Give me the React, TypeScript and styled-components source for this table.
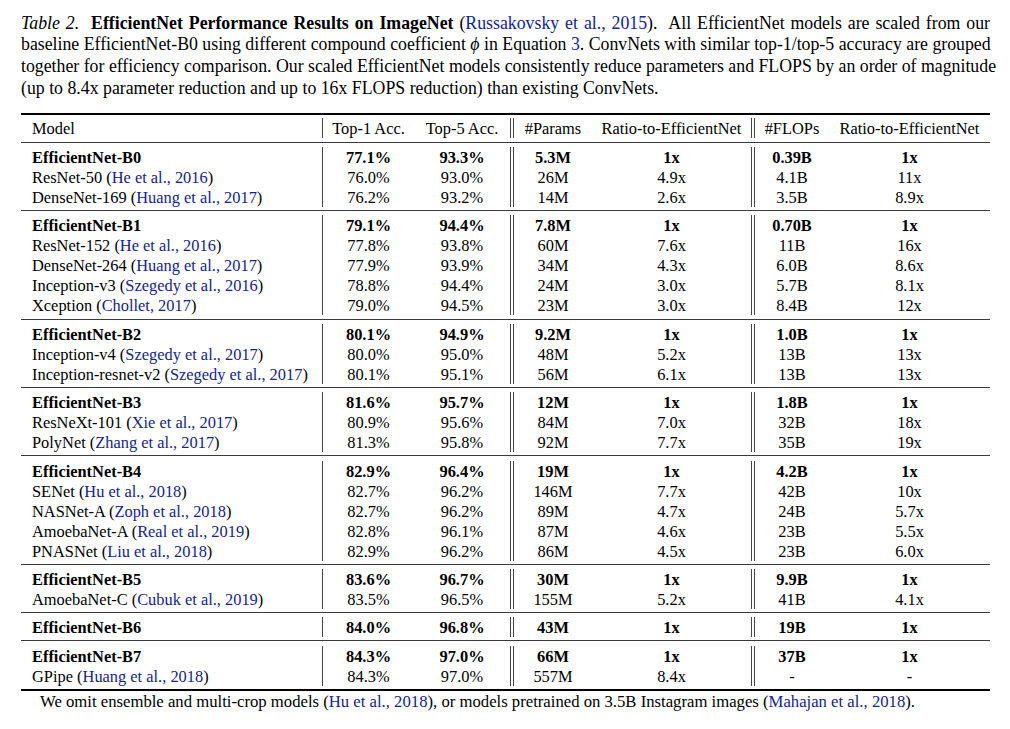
import React from "react";
import styled, { createGlobalStyle } from "styled-components";

const GlobalStyle = createGlobalStyle`
  html, body {
    margin: 0;
    padding: 0;
    background: #ffffff;
  }
  body {
    font-family: "Liberation Serif", "Times New Roman", serif;
    color: #000;
  }
`;

const Page = styled.div`
  width: 1010px;
  padding: 12.5px 20px 0 21px;
  box-sizing: border-box;
`;

const Caption = styled.div`
  font-size: 17.8px;
  line-height: 21.7px;
  margin-bottom: 13.5px;
`;

const CaptionLine = styled.div<{ last?: boolean }>`
  text-align: justify;
  text-align-last: ${({ last }) => (last ? "left" : "justify")};
  white-space: nowrap;
`;

const Cite = styled.span`
  color: #14248c;
`;

const Table = styled.div`
  border-top: 2px solid #000;
  border-bottom: 2px solid #000;
  font-size: 16.4px;
`;

const Group = styled.div<{ header?: boolean }>`
  padding: ${({ header }) => (header ? "3px 0 4px" : "4.2px 0 3.2px")};
  border-bottom: 1px solid #3a3a3a;
  &:last-child {
    border-bottom: none;
  }
`;

const Row = styled.div`
  display: grid;
  grid-template-columns: 301px 92px 96px 82px 159px 78px 161px;
  height: 20px;
  line-height: 21px;
`;

const Cell = styled.div<{ sep?: "single" | "double"; bold?: boolean }>`
  box-sizing: border-box;
  height: 20px;
  text-align: center;
  white-space: nowrap;
  font-weight: ${({ bold }) => (bold ? 700 : 400)};
  border-left: ${({ sep }) =>
    sep === "double" ? "4px double #444" : sep === "single" ? "1px solid #444" : "none"};
`;

const ModelCell = styled(Cell)`
  text-align: left;
  padding-left: 11px;
`;

const Footer = styled.div`
  font-size: 16.7px;
  line-height: 20px;
  padding: 1px 0 0 19px;
`;

type Entry = {
  model: string;
  cite?: string;
  top1: string;
  top5: string;
  params: string;
  pRatio: string;
  flops: string;
  fRatio: string;
};

const e = (
  model: string,
  cite: string | undefined,
  top1: string,
  top5: string,
  params: string,
  pRatio: string,
  flops: string,
  fRatio: string
): Entry => ({ model, cite, top1, top5, params, pRatio, flops, fRatio });

const groups: Entry[][] = [
  [
    e("EfficientNet-B0", undefined, "77.1%", "93.3%", "5.3M", "1x", "0.39B", "1x"),
    e("ResNet-50", "He et al., 2016", "76.0%", "93.0%", "26M", "4.9x", "4.1B", "11x"),
    e("DenseNet-169", "Huang et al., 2017", "76.2%", "93.2%", "14M", "2.6x", "3.5B", "8.9x"),
  ],
  [
    e("EfficientNet-B1", undefined, "79.1%", "94.4%", "7.8M", "1x", "0.70B", "1x"),
    e("ResNet-152", "He et al., 2016", "77.8%", "93.8%", "60M", "7.6x", "11B", "16x"),
    e("DenseNet-264", "Huang et al., 2017", "77.9%", "93.9%", "34M", "4.3x", "6.0B", "8.6x"),
    e("Inception-v3", "Szegedy et al., 2016", "78.8%", "94.4%", "24M", "3.0x", "5.7B", "8.1x"),
    e("Xception", "Chollet, 2017", "79.0%", "94.5%", "23M", "3.0x", "8.4B", "12x"),
  ],
  [
    e("EfficientNet-B2", undefined, "80.1%", "94.9%", "9.2M", "1x", "1.0B", "1x"),
    e("Inception-v4", "Szegedy et al., 2017", "80.0%", "95.0%", "48M", "5.2x", "13B", "13x"),
    e("Inception-resnet-v2", "Szegedy et al., 2017", "80.1%", "95.1%", "56M", "6.1x", "13B", "13x"),
  ],
  [
    e("EfficientNet-B3", undefined, "81.6%", "95.7%", "12M", "1x", "1.8B", "1x"),
    e("ResNeXt-101", "Xie et al., 2017", "80.9%", "95.6%", "84M", "7.0x", "32B", "18x"),
    e("PolyNet", "Zhang et al., 2017", "81.3%", "95.8%", "92M", "7.7x", "35B", "19x"),
  ],
  [
    e("EfficientNet-B4", undefined, "82.9%", "96.4%", "19M", "1x", "4.2B", "1x"),
    e("SENet", "Hu et al., 2018", "82.7%", "96.2%", "146M", "7.7x", "42B", "10x"),
    e("NASNet-A", "Zoph et al., 2018", "82.7%", "96.2%", "89M", "4.7x", "24B", "5.7x"),
    e("AmoebaNet-A", "Real et al., 2019", "82.8%", "96.1%", "87M", "4.6x", "23B", "5.5x"),
    e("PNASNet", "Liu et al., 2018", "82.9%", "96.2%", "86M", "4.5x", "23B", "6.0x"),
  ],
  [
    e("EfficientNet-B5", undefined, "83.6%", "96.7%", "30M", "1x", "9.9B", "1x"),
    e("AmoebaNet-C", "Cubuk et al., 2019", "83.5%", "96.5%", "155M", "5.2x", "41B", "4.1x"),
  ],
  [e("EfficientNet-B6", undefined, "84.0%", "96.8%", "43M", "1x", "19B", "1x")],
  [
    e("EfficientNet-B7", undefined, "84.3%", "97.0%", "66M", "1x", "37B", "1x"),
    e("GPipe", "Huang et al., 2018", "84.3%", "97.0%", "557M", "8.4x", "-", "-"),
  ],
];

function DataRow({ row, bold }: { row: Entry; bold: boolean }) {
  return (
    <Row>
      <ModelCell bold={bold}>
        {row.model}
        {row.cite && (
          <>
            {" ("}
            <Cite>{row.cite}</Cite>)
          </>
        )}
      </ModelCell>
      <Cell sep="single" bold={bold}>{row.top1}</Cell>
      <Cell bold={bold}>{row.top5}</Cell>
      <Cell sep="double" bold={bold}>{row.params}</Cell>
      <Cell bold={bold}>{row.pRatio}</Cell>
      <Cell sep="double" bold={bold}>{row.flops}</Cell>
      <Cell bold={bold}>{row.fRatio}</Cell>
    </Row>
  );
}

export default function App() {
  return (
    <>
      <GlobalStyle />
      <Page>
        <Caption>
          <CaptionLine>
            <i>Table 2.</i>&nbsp; <b>EfficientNet Performance Results on ImageNet</b> (
            <Cite>Russakovsky et al., 2015</Cite>).&nbsp; All EfficientNet models are scaled from our
          </CaptionLine>
          <CaptionLine>
            baseline EfficientNet-B0 using different compound coefficient <i>ϕ</i> in Equation{" "}
            <Cite>3</Cite>. ConvNets with similar top-1/top-5 accuracy are grouped
          </CaptionLine>
          <CaptionLine>
            together for efficiency comparison. Our scaled EfficientNet models consistently reduce
            parameters and FLOPS by an order of magnitude
          </CaptionLine>
          <CaptionLine last>
            (up to 8.4x parameter reduction and up to 16x FLOPS reduction) than existing ConvNets.
          </CaptionLine>
        </Caption>
        <Table>
          <Group header>
            <Row>
              <ModelCell>Model</ModelCell>
              <Cell sep="single">Top-1 Acc.</Cell>
              <Cell>Top-5 Acc.</Cell>
              <Cell sep="double">#Params</Cell>
              <Cell>Ratio-to-EfficientNet</Cell>
              <Cell sep="double">#FLOPs</Cell>
              <Cell>Ratio-to-EfficientNet</Cell>
            </Row>
          </Group>
          {groups.map((g, gi) => (
            <Group key={gi}>
              {g.map((row, ri) => (
                <DataRow key={ri} row={row} bold={ri === 0} />
              ))}
            </Group>
          ))}
        </Table>
        <Footer>
          We omit ensemble and multi-crop models (<Cite>Hu et al., 2018</Cite>), or models pretrained
          on 3.5B Instagram images (<Cite>Mahajan et al., 2018</Cite>).
        </Footer>
      </Page>
    </>
  );
}
